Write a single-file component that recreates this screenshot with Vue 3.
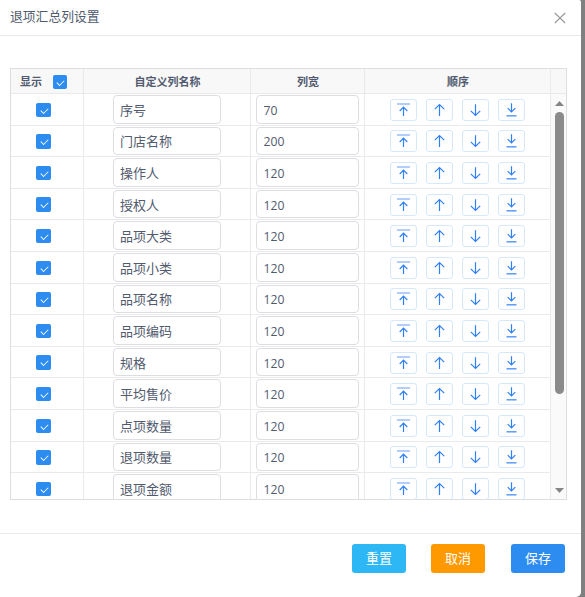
<script setup>
import { computed, ref } from 'vue';

const defaults = [
  ['序号', 70],
  ['门店名称', 200],
  ['操作人', 120],
  ['授权人', 120],
  ['品项大类', 120],
  ['品项小类', 120],
  ['品项名称', 120],
  ['品项编码', 120],
  ['规格', 120],
  ['平均售价', 120],
  ['点项数量', 120],
  ['退项数量', 120],
  ['退项金额', 120],
];

const moves = [
  { type: 'top', title: '置顶' },
  { type: 'up', title: '上移' },
  { type: 'down', title: '下移' },
  { type: 'bottom', title: '置底' },
];

const visible = ref(true);
const columns = ref(createColumns());

const allShown = computed({
  get: () => columns.value.every((column) => column.show),
  set: (value) => columns.value.forEach((column) => { column.show = value; }),
});

function createColumns() {
  return defaults.map(([name, width], id) => ({ id, name, width, show: true }));
}

function reset() {
  columns.value = createColumns();
}

function close() {
  visible.value = false;
}

/** Bound to the order buttons. */
function move(index, type) {
  const last = columns.value.length - 1;
  const target = { top: 0, up: Math.max(index - 1, 0), down: Math.min(index + 1, last), bottom: last }[type];
  const [column] = columns.value.splice(index, 1);
  columns.value.splice(target, 0, column);
}
</script>

<template>
  <div class="page">
    <div v-if="visible" class="dialog">
      <header class="dialogHeader">
        <span class="title">退项汇总列设置</span>
        <button type="button" class="close" @click="close">
          <svg width="12" height="12" viewBox="0 0 12 12"><path d="M.8 1l10.4 10M11.2 1L.8 11" /></svg>
        </button>
      </header>

      <main class="dialogBody">
        <div class="table">
          <div class="row headRow">
            <div class="cell showHead">
              显示
              <input v-model="allShown" type="checkbox" class="check checkAll">
            </div>
            <div class="cell">自定义列名称</div>
            <div class="cell">列宽</div>
            <div class="cell">顺序</div>
          </div>

          <div class="tableBody">
            <div class="rows">
              <div v-for="(column, index) in columns" :key="column.id" class="row">
                <div class="cell showCell">
                  <input v-model="column.show" type="checkbox" class="check">
                </div>
                <div class="cell">
                  <input v-model="column.name" type="text" class="field nameField">
                </div>
                <div class="cell widthCell">
                  <input v-model="column.width" type="text" class="field widthField">
                </div>
                <div class="cell orderCell">
                  <button
                    v-for="item in moves"
                    :key="item.type"
                    type="button"
                    class="moveButton"
                    :aria-label="item.title"
                    @click="move(index, item.type)"
                  >
                    <svg v-if="item.type === 'top'" width="15" height="16" viewBox="0 0 15 16">
                      <path class="bar" d="M1 2h13" />
                      <path d="M7.5 14V5.5M3.7 9L7.5 5.2L11.3 9" />
                    </svg>
                    <svg v-else-if="item.type === 'up'" width="15" height="16" viewBox="0 0 15 16">
                      <path d="M7.5 14V2.8M2.8 7.2L7.5 2.5L12.2 7.2" />
                    </svg>
                    <svg v-else-if="item.type === 'down'" width="15" height="16" viewBox="0 0 15 16">
                      <path d="M7.5 2.2V13.2M2.8 8.8L7.5 13.5L12.2 8.8" />
                    </svg>
                    <svg v-else width="15" height="16" viewBox="0 0 15 16">
                      <path d="M7.5 1.2V10.2M3.7 6.2L7.5 10L11.3 6.2" />
                      <path class="base" d="M2.5 13.8h10" />
                    </svg>
                  </button>
                </div>
              </div>
            </div>

            <div class="scrollbar">
              <svg width="9" height="5" viewBox="0 0 9 5"><path d="M0 5L4.5 0L9 5z" /></svg>
              <div class="thumb" />
              <svg width="9" height="5" viewBox="0 0 9 5"><path d="M0 0L4.5 5L9 0z" /></svg>
            </div>
          </div>
        </div>
      </main>

      <footer class="dialogFooter">
        <button type="button" class="action info" @click="reset">重置</button>
        <button type="button" class="action warning" @click="close">取消</button>
        <button type="button" class="action primary" @click="close">保存</button>
      </footer>
    </div>
  </div>
</template>

<style>
body {
  margin: 0;
  overflow: hidden;
}
</style>

<style scoped>
.page {
  background: #808080;
  color: #515a6e;
  font-family: 'Open Sans', 'Noto Sans CJK SC', sans-serif;
  font-size: 13px;
  height: 597px;
  width: 585px;
}

.page *,
.page {
  box-sizing: border-box;
}

button,
input {
  color: inherit;
  font: inherit;
  margin: 0;
}

.dialog {
  background: #fff;
  border-radius: 0 2px 5px 0;
  display: flex;
  flex-direction: column;
  height: 597px;
  width: 581px;
}

.dialogHeader {
  align-items: center;
  border-bottom: 1px solid #e8eaec;
  display: flex;
  height: 36px;
  justify-content: space-between;
  padding: 0 15px 4px 10px;
}

.title {
  font-size: 12.8px;
  line-height: 20px;
}

.close {
  background: none;
  border: none;
  cursor: pointer;
  display: flex;
  padding: 4px 0 0;
}

.close path {
  fill: none;
  stroke: #999;
  stroke-width: 1.1;
}

.dialogBody {
  height: 497px;
  padding: 32px 14px 33px 10px;
}

.table {
  border: 1px solid #dcdee2;
  height: 432px;
  overflow: hidden;
}

.row {
  display: grid;
  grid-template-columns: 73px 167px 114px 186px;
  height: 31.6px;
}

.cell {
  align-items: center;
  border-bottom: 1px solid #e8eaec;
  border-right: 1px solid #e8eaec;
  display: flex;
  justify-content: center;
}

.headRow {
  background: #f8f8f9;
  font-size: 11px;
  font-weight: 700;
  grid-template-columns: 73px 167px 114px 186px 15px;
  height: 25px;
}

.headRow .cell {
  padding-left: 1px;
}

.headRow::after {
  border-bottom: 1px solid #e8eaec;
  content: '';
}

.headRow .showHead {
  gap: 11px;
  justify-content: flex-start;
  padding-left: 9px;
}

.tableBody {
  display: grid;
  grid-template-columns: 540px 15px;
  height: 405px;
}

.rows {
  height: 405px;
  overflow: hidden;
}

.showCell {
  padding: 1px 7px 0 0;
}

.check {
  appearance: none;
  background: #fff;
  border: 1px solid #dcdee2;
  border-radius: 1.5px;
  cursor: pointer;
  flex: none;
  height: 14.4px;
  position: relative;
  width: 15px;
}

.checkAll {
  height: 14px;
  margin-top: 1px;
  width: 14px;
}

.check:checked {
  background: #2d8cf0;
  border-color: #2d8cf0;
}

.check:checked::after {
  border: solid #fff;
  border-width: 0 1.2px 1.2px 0;
  content: '';
  height: 7px;
  left: 4.5px;
  position: absolute;
  top: 2px;
  transform: rotate(45deg) scale(0.88);
  width: 4px;
}

.checkAll:checked::after {
  left: 4px;
}

.field {
  background: #fff;
  border: 1px solid #dcdee2;
  border-radius: 4px;
  height: 28.6px;
  outline: none;
  padding: 0 6px;
}

.nameField {
  width: 108px;
}

.widthField {
  font-size: 12.2px;
  padding: 2px 6px 0 6.6px;
  width: 103px;
}

.orderCell {
  gap: 9px;
  padding: 1px 0 0;
}

.moveButton {
  align-items: center;
  background: #fff;
  border: 1px solid #d5e8fc;
  border-radius: 3px;
  cursor: pointer;
  display: flex;
  height: 22px;
  justify-content: center;
  padding: 0;
  width: 27.1px;
}

.moveButton path {
  fill: none;
  stroke: #2f80f7;
  stroke-width: 1.2;
}

.moveButton .bar {
  stroke: #b3cdfd;
  stroke-width: 2;
}

.moveButton .base {
  stroke: #5b9bfa;
  stroke-width: 1.5;
}

.scrollbar {
  align-items: center;
  background: #fafafa;
  display: flex;
  flex-direction: column;
  padding: 7px 0 6px 2px;
}

.scrollbar path {
  fill: #858585;
}

.thumb {
  background: #8b8b8b;
  border-radius: 5px;
  height: 282px;
  margin: 6px 0 auto;
  width: 9px;
}

.dialogFooter {
  border-top: 1px solid #e8eaec;
  display: flex;
  gap: 25px;
  justify-content: flex-end;
  padding: 10px 16px 0 0;
}

.action {
  border: none;
  border-radius: 3px;
  color: #fff;
  cursor: pointer;
  height: 29px;
  padding: 0 0 2px;
  width: 54px;
}

.info {
  background: #2db7f5;
}

.warning {
  background: #f90;
}

.primary {
  background: #2d8cf0;
  margin-left: 1px;
}
</style>
